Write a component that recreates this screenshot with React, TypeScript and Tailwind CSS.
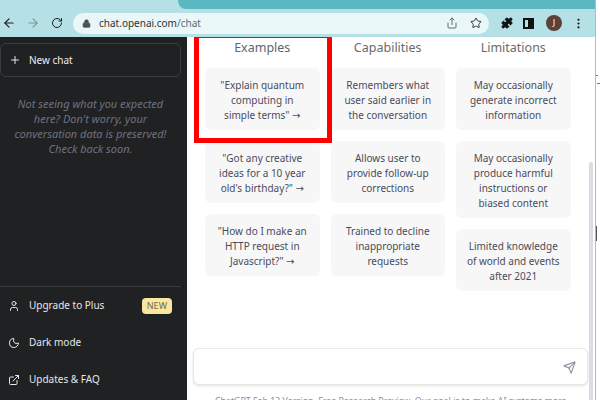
import React from 'react';
import { ArrowLeft, ArrowRight, RotateCw, Lock, Share, Star, Puzzle, MoreVertical, Plus, User, Moon, ExternalLink, Send } from 'lucide-react';

const columns = [
  {
    title: 'Examples',
    titleClass: 'text-[#5f6573]',
    items: [
      ['"Explain quantum', 'computing in', 'simple terms" →'],
      ['"Got any creative', 'ideas for a 10 year', 'old\'s birthday?" →'],
      ['"How do I make an', 'HTTP request in', 'Javascript?" →'],
    ],
  },
  {
    title: 'Capabilities',
    titleClass: 'text-[#6b6b6b]',
    items: [
      ['Remembers what', 'user said earlier in', 'the conversation'],
      ['Allows user to', 'provide follow-up', 'corrections'],
      ['Trained to decline', 'inappropriate', 'requests'],
    ],
  },
  {
    title: 'Limitations',
    titleClass: 'text-[#6b6b6b]',
    items: [
      ['May occasionally', 'generate incorrect', 'information'],
      ['May occasionally', 'produce harmful', 'instructions or', 'biased content'],
      ['Limited knowledge', 'of world and events', 'after 2021'],
    ],
  },
];

const BrowserBar = () => (
  <div className="h-[37px] shrink-0 bg-[#b5e0e5] flex flex-col">
    <div className="h-[9px] pl-[178px]">
      <div className="h-full bg-[#5bb8c2] rounded-bl-lg" />
    </div>
    <div className="flex-1 flex items-center pl-[2px]">
      <ArrowLeft size={14} className="text-[#1f1f1f]" />
      <ArrowRight size={14} className="text-[#7d9598] ml-[10px]" />
      <RotateCw size={12} className="text-[#1f1f1f] ml-[11px]" />
      <div className="ml-[10px] w-[416px] h-[21px] rounded-full bg-[#eaf7f8] flex items-center pl-[9px] pr-[7px]">
        <Lock size={9} className="text-[#4a5254] fill-[#4a5254]" />
        <span className="ml-[8px] text-[10px] text-[#2d3436]">
          chat.openai.com<span className="text-[#5f6b6e]">/chat</span>
        </span>
        <Share size={12} className="ml-auto text-[#5f6b6e]" />
        <Star size={12} className="ml-[12px] text-[#2d3436]" />
      </div>
      <Puzzle size={12} className="ml-[12px] text-[#111] fill-[#111]" />
      <div className="ml-[10px] w-[11px] h-[11px] border-2 border-[#111] border-r-[6px]" />
      <div className="ml-[12px] w-4 h-4 rounded-full bg-[#5d4037] text-white text-[9px] flex items-center justify-center">J</div>
      <MoreVertical size={13} className="ml-[10px] text-[#111]" />
    </div>
  </div>
);

const SideLink = ({ icon, label, badge }: { icon: React.ReactNode; label: string; badge?: boolean }) => (
  <div className="h-[37px] flex items-center pl-2 text-[#e5e7eb] text-[10px]">
    {icon}
    <span className="ml-[9px]">{label}</span>
    {badge && (
      <span className="ml-auto mr-[9px] px-[5px] h-[16px] leading-[16px] rounded bg-[#fae69e] text-[#6f6a58] text-[9px]">NEW</span>
    )}
  </div>
);

const Sidebar = () => (
  <div className="w-[187px] shrink-0 bg-[#202123] flex flex-col">
    <div className="mt-[6px] w-[181px] h-[34px] border border-[#3b3c3f] rounded-md flex items-center pl-2 text-[10px]">
      <Plus size={12} className="text-[#e5e7eb]" />
      <span className="ml-[8px] text-[#ececf1]">New chat</span>
    </div>
    <div className="mt-[19px] w-[181px] text-center italic text-[#6f7180] text-[11px] leading-[15px]">
      <p>Not seeing what you expected</p>
      <p>here? Don't worry, your</p>
      <p>conversation data is preserved!</p>
      <p>Check back soon.</p>
    </div>
    <div className="mt-auto">
      <div className="w-[181px] h-px bg-[#3b3c3f]" />
      <div className="w-[181px] mb-[2px]">
        <SideLink icon={<User size={12} />} label="Upgrade to Plus" badge />
        <SideLink icon={<Moon size={12} />} label="Dark mode" />
        <SideLink icon={<ExternalLink size={12} />} label="Updates & FAQ" />
      </div>
    </div>
  </div>
);

const CardLine = ({ text }: { text: string }) =>
  text.endsWith('→') ? (
    <div>
      {text.slice(0, -1)}
      <span className="font-['DejaVu_Sans',sans-serif]">→</span>
    </div>
  ) : (
    <div>{text}</div>
  );

const Main = () => (
  <div className="flex-1 relative flex flex-col overflow-hidden bg-white">
    <div className="flex gap-[11px] pl-[18px]">
      {columns.map(col => (
        <div key={col.title} className="w-[114.5px] flex flex-col">
          <div className={`h-[21px] leading-[21px] text-center text-[12.5px] ${col.titleClass}`}>{col.title}</div>
          <div className="mt-[10px] flex flex-col gap-[11px]">
            {col.items.map(lines => (
              <div key={lines[0]} className="bg-[#f7f7f8] rounded-md pt-[10px] pb-[7px] text-center text-[10px] leading-[15px] text-[#4b4c5a]">
                {lines.map(line => (
                  <CardLine key={line} text={line} />
                ))}
              </div>
            ))}
          </div>
        </div>
      ))}
    </div>
    <div className="absolute left-[7px] top-[-4px] w-[138px] h-[110px] border-[5px] border-[#ff0000]" />
    <div className="absolute right-[2px] top-[125px] bottom-0 w-[4px] rounded-t bg-[#dcdce6]" />
    <div className="absolute left-[6px] top-[311px] w-[395px] h-[37px] bg-white rounded-md border border-[#e8e8e8] shadow-sm flex items-center justify-end pr-[11px]">
      <Send size={13} className="text-[#8e8ea0] mt-[1px]" />
    </div>
    <div className="absolute left-[28px] top-[358px] text-[8.8px] text-[#8e8ea0] whitespace-nowrap">
      ChatGPT Feb 13 Version. Free Research Preview. Our goal is to make AI systems more
    </div>
  </div>
);

export default function App() {
  return (
    <div className="w-[600px] h-[400px] overflow-hidden flex font-['Noto_Sans',sans-serif]">
      <div className="w-[595px] flex flex-col">
        <BrowserBar />
        <div className="flex-1 flex min-h-0 bg-white">
          <Sidebar />
          <Main />
        </div>
      </div>
      <div className="w-[5px] border-l border-[#b8b8b8] bg-white flex flex-col">
        <div className="mt-[75px] h-px w-[2px] bg-[#777]" />
        <div className="mt-[7px] h-px w-[3px] ml-[1px] bg-[#777]" />
        <div className="mt-[142px] h-[15px] w-[1px] bg-[#555]" />
      </div>
    </div>
  );
}
